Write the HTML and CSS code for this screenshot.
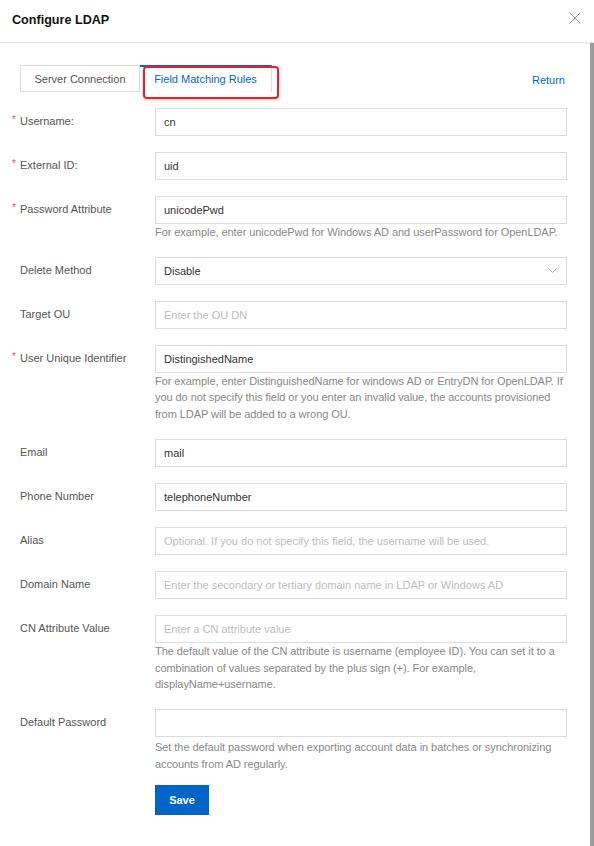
FILE: index.html
```html
<!DOCTYPE html>
<html>
<head>
<meta charset="utf-8">
<link rel="stylesheet" href="styles.css">
</head>
<body>
<div class="dialog">
  <div class="header">
    <div class="title">Configure LDAP</div>
    <svg class="close" width="12" height="12" viewBox="0 0 12 12"><path d="M0.5 0.5L11.5 11.5M11.5 0.5L0.5 11.5" stroke="#999" stroke-width="1" fill="none"/></svg>
  </div>
  <div class="body">
    <div class="content">
      <div class="tabbar">
        <div class="tabs">
          <div class="tab">Server Connection</div>
          <div class="tab active">Field Matching Rules<span class="highlight"></span></div>
        </div>
        <a class="return">Return</a>
      </div>

      <div class="row">
        <div class="label"><span class="req">*</span>Username:</div>
        <div class="field"><input class="input" value="cn"></div>
      </div>
      <div class="row">
        <div class="label"><span class="req">*</span>External ID:</div>
        <div class="field"><input class="input" value="uid"></div>
      </div>
      <div class="row">
        <div class="label"><span class="req">*</span>Password Attribute</div>
        <div class="field"><input class="input" value="unicodePwd">
          <div class="help">For example, enter unicodePwd for Windows AD and userPassword for OpenLDAP.</div>
        </div>
      </div>
      <div class="row">
        <div class="label"><span class="req"></span>Delete Method</div>
        <div class="field"><div class="select"><span>Disable</span>
          <svg width="9" height="5" viewBox="0 0 9 5"><path d="M0.5 0.5L4.5 4.5L8.5 0.5" stroke="#aaa" stroke-width="1" fill="none"/></svg></div></div>
      </div>
      <div class="row">
        <div class="label"><span class="req"></span>Target OU</div>
        <div class="field"><input class="input" placeholder="Enter the OU DN"></div>
      </div>
      <div class="row">
        <div class="label"><span class="req">*</span>User Unique Identifier</div>
        <div class="field"><input class="input" value="DistingishedName">
          <div class="help">For example, enter DistinguishedName for windows AD or EntryDN for OpenLDAP. If you do not specify this field or you enter an invalid value, the accounts provisioned from LDAP will be added to a wrong OU.</div>
        </div>
      </div>
      <div class="row">
        <div class="label"><span class="req"></span>Email</div>
        <div class="field"><input class="input" value="mail"></div>
      </div>
      <div class="row">
        <div class="label"><span class="req"></span>Phone Number</div>
        <div class="field"><input class="input" value="telephoneNumber"></div>
      </div>
      <div class="row">
        <div class="label"><span class="req"></span>Alias</div>
        <div class="field"><input class="input" placeholder="Optional. If you do not specify this field, the username will be used."></div>
      </div>
      <div class="row">
        <div class="label"><span class="req"></span>Domain Name</div>
        <div class="field"><input class="input" placeholder="Enter the secondary or tertiary domain name in LDAP or Windows AD"></div>
      </div>
      <div class="row">
        <div class="label"><span class="req"></span>CN Attribute Value</div>
        <div class="field"><input class="input" placeholder="Enter a CN attribute value">
          <div class="help">The default value of the CN attribute is username (employee ID). You can set it to a combination of values separated by the plus sign (+). For example, displayName+username.</div>
        </div>
      </div>
      <div class="row">
        <div class="label"><span class="req"></span>Default Password</div>
        <div class="field"><input class="input" value="">
          <div class="help help-pad">Set the default password when exporting account data in batches or synchronizing accounts from AD regularly.</div>
          <button class="save">Save</button>
        </div>
      </div>
    </div>
    <div class="scrollbar"></div>
  </div>
</div>
</body>
</html>
```

FILE: styles.css
```css
html, body {
  margin: 0;
  padding: 0;
  background: #fff;
}
body {
  font-family: "Liberation Sans", Arial, sans-serif;
  font-size: 11px;
  color: #333;
  width: 594px;
  height: 846px;
  overflow: hidden;
}
.dialog {
  display: flex;
  flex-direction: column;
  height: 846px;
}
.header {
  height: 42px;
  border-bottom: 1px solid #e4e4e4;
  display: flex;
  align-items: center;
  justify-content: space-between;
  padding: 0 13px 0 12px;
  flex: none;
}
.title {
  font-size: 12.6px;
  font-weight: bold;
  color: #111;
  margin-top: -3px;
}
.close {
  margin-top: -6px;
}
.body {
  flex: 1;
  display: flex;
  min-height: 0;
}
.content {
  flex: 1;
  padding: 22px 23px 0 12px;
}
.scrollbar {
  width: 4px;
  background: #9b9b9b;
  flex: none;
}
.tabbar {
  display: flex;
  align-items: center;
  justify-content: space-between;
  margin: 0 0 16px 8px;
  height: 27px;
}
.tabs {
  display: flex;
  height: 27px;
}
.tab {
  box-sizing: border-box;
  height: 27px;
  border: 1px solid #ddd;
  background: #fff;
  color: #555;
  display: flex;
  align-items: center;
  justify-content: center;
  width: 120px;
  font-size: 11px;
}
.tab.active {
  position: relative;
  width: 132px;
  border-left: none;
  border-bottom: none;
  border-top: 2px solid #0066cc;
  color: #0066cc;
  padding-bottom: 2px;
}
.highlight {
  position: absolute;
  left: 3px;
  top: -1px;
  width: 136px;
  height: 33px;
  box-sizing: border-box;
  border: 2.5px solid #dc2430;
  border-radius: 4px;
  box-shadow: 0 1px 3px rgba(200, 40, 50, 0.35);
}
.return {
  color: #0066cc;
  font-size: 11px;
  margin-right: 2px;
  margin-top: 2px;
}
.row {
  display: flex;
  margin-bottom: 16px;
}
.label {
  width: 143px;
  flex: none;
  height: 28px;
  line-height: 28px;
  color: #555;
  font-size: 11px;
  display: flex;
  margin-top: -1px;
}
.req {
  width: 8px;
  color: #e8505b;
  font-size: 10px;
  line-height: 26px;
}
.field {
  flex: 1;
  min-width: 0;
}
.input, .select {
  display: flex;
  align-items: center;
  box-sizing: border-box;
  width: 100%;
  height: 28px;
  border: 1px solid #dcdcdc;
  background: #fff;
  padding: 0 8px;
  font-family: "Liberation Sans", Arial, sans-serif;
  font-size: 11px;
  color: #333;
  outline: none;
  margin: 0;
}
.input::placeholder {
  color: #bdbdbd;
}
.select {
  justify-content: space-between;
  padding-right: 9px;
}
.help {
  color: #888;
  font-size: 11px;
  line-height: 16.7px;
  letter-spacing: -0.06px;
}
.help-pad {
  padding-top: 2px;
}
.save {
  display: block;
  margin-top: 13px;
  width: 54px;
  height: 30px;
  background: #0064c8;
  border: none;
  color: #fff;
  font-family: "Liberation Sans", Arial, sans-serif;
  font-weight: bold;
  font-size: 11px;
  padding: 0;
}
```
